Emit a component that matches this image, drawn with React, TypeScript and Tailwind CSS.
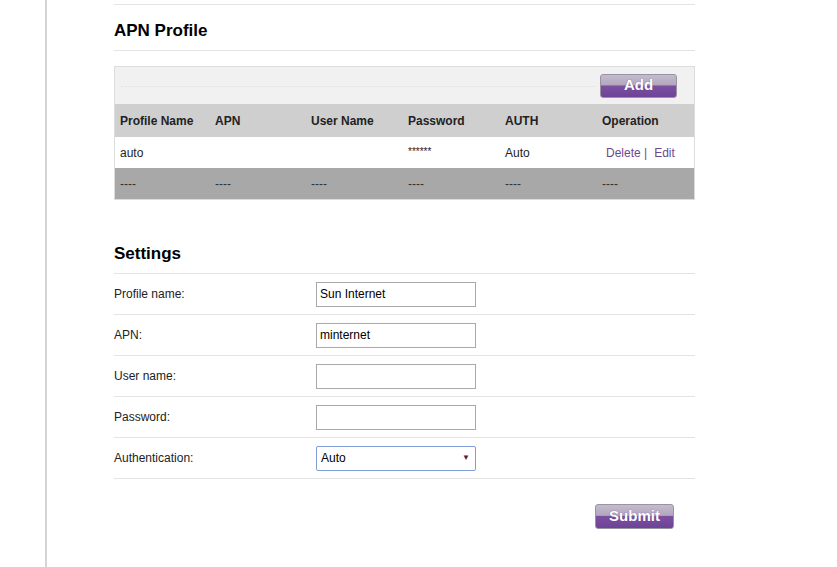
const cols = ["Profile Name", "APN", "User Name", "Password", "AUTH", "Operation"];

const fields = [
  { label: "Profile name:", value: "Sun Internet" },
  { label: "APN:", value: "minternet" },
  { label: "User name:", value: "" },
  { label: "Password:", value: "" },
];

const gridCols = "grid grid-cols-[95px_96px_97px_97px_97px_1fr] items-center pl-[5px]";

const PurpleButton = ({ text, className }: { text: string; className: string }) => (
  <button
    className={`flex items-center justify-center rounded-[3px] border border-[#9a93a3] bg-[linear-gradient(#c4bccb_0%,#b3a7c0_45%,#7b4fa0_50%,#6e4296_100%)] text-[15px] font-bold text-white [text-shadow:0_0_1px_#6b4a8a] ${className}`}
  >
    {text}
  </button>
);

export default function App() {
  return (
    <div className="flex min-h-[567px] w-[837px] bg-white font-['Liberation_Sans',Arial,sans-serif] text-[12px] text-[#222]">
      <div className="w-[47px] shrink-0 border-r-2 border-[#d4d4d4]" />
      <div className="ml-[67px] w-[581px] pt-[4px]">
        <div className="flex h-[47px] items-center border-y border-[#e3e3e3] pt-[6px] text-[17px] font-bold text-black">
          APN Profile
        </div>

        <div className="mt-[15px] border border-[#dcdcdc]">
          <div className="flex h-[37px] items-center bg-[#f1f1f1] pl-[6px] pr-[17px]">
            <div className="mr-[5px] mt-[1px] flex-1 border-t border-dotted border-[#e0e0e0]" />
            <PurpleButton text="Add" className="h-[24px] w-[77px]" />
          </div>
          <div className={`${gridCols} h-[33px] bg-[#cfcfcf] font-bold text-[#222]`}>
            {cols.map((c) => (
              <div key={c}>{c}</div>
            ))}
          </div>
          <div className={`${gridCols} h-[31px] bg-white`}>
            <div>auto</div>
            <div />
            <div />
            <div className="-mt-[3px] text-[10px]">******</div>
            <div>Auto</div>
            <div className="pl-[4px] text-[#6b4a8f]">
              Delete |<span className="ml-[7px]">Edit</span>
            </div>
          </div>
          <div className={`${gridCols} h-[31px] bg-[#a8a8a8] text-[#333]`}>
            {cols.map((c) => (
              <div key={c}>----</div>
            ))}
          </div>
        </div>

        <div className="mt-[33px] flex h-[41px] items-center border-b border-[#e3e3e3] pt-[1px] text-[17px] font-bold text-black">
          Settings
        </div>
        {fields.map((f) => (
          <div key={f.label} className="flex h-[41px] items-center border-b border-[#e3e3e3]">
            <div className="w-[202px]">{f.label}</div>
            <input
              readOnly
              value={f.value}
              className="h-[25px] w-[160px] border border-[#a9a9a9] px-[3px] text-[12px] text-black outline-none"
            />
          </div>
        ))}
        <div className="flex h-[41px] items-center border-b border-[#e3e3e3]">
          <div className="w-[202px]">Authentication:</div>
          <div className="flex h-[25px] w-[160px] items-center justify-between rounded-[2px] border border-[#7f9fd6] px-[4px] text-black">
            <span>Auto</span>
            <span className="mr-[1px] text-[8px] text-[#5a2030]">▼</span>
          </div>
        </div>

        <div className="mt-[25px] flex justify-end pr-[21px]">
          <PurpleButton text="Submit" className="h-[25px] w-[79px]" />
        </div>
      </div>
    </div>
  );
}
